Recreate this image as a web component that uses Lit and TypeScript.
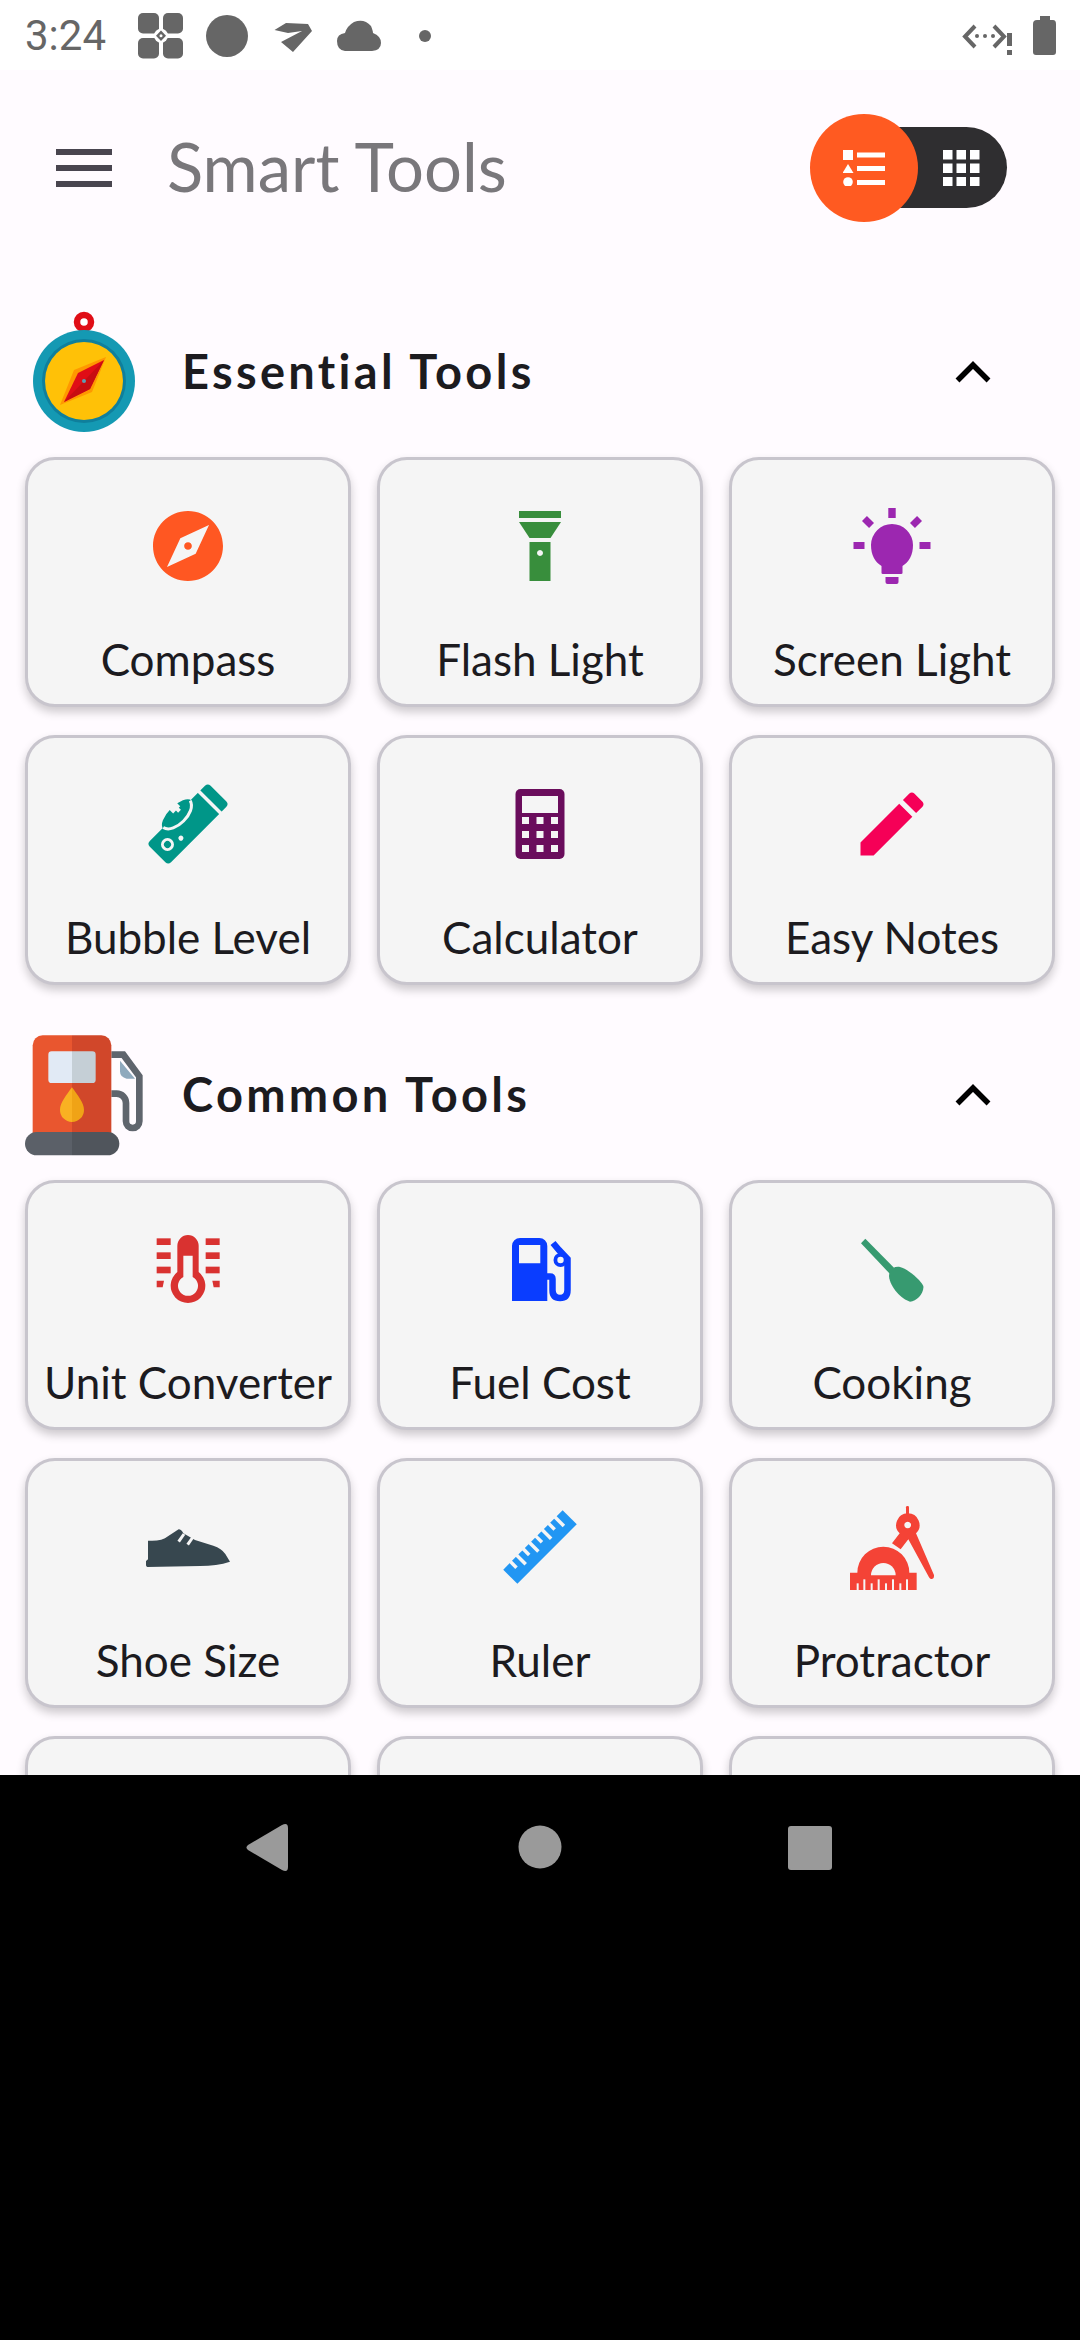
import { LitElement, css, html, svg } from 'lit';
import { customElement } from 'lit/decorators.js';

const CUT = '#f5f5f5';

// material icons are on a 24 grid, 3.5x gives the 84px they have in the app
const mat = (d: string, fill: string) =>
  svg`<g transform="scale(3.5) translate(-12,-12)"><path d=${d} fill=${fill} fill-rule="evenodd"/></g>`;

const compass = mat(
  'M12 2C6.48 2 2 6.48 2 12s4.48 10 10 10 10-4.48 10-10S17.52 2 12 2zm2.19 12.19L6 18l3.81-8.19L18 6l-3.81 8.19zM12 10.9c-.61 0-1.1.49-1.1 1.1s.49 1.1 1.1 1.1c.61 0 1.1-.49 1.1-1.1s-.49-1.1-1.1-1.1z',
  '#ff5722'
);

const flash = svg`<g fill="#388e3c">
  <rect x="-21" y="-35" width="42" height="7"/>
  <path d="M-21-24H21L10.500-8H-10.500Z"/>
  <path fill-rule="evenodd" d="M-10.500-4H10.500V35H-10.500ZM0 4a3 3 0 1 0 .01 0Z"/>
</g>`;

const bulb = svg`<g fill="#9c27b0">
  <path d="M-10.500 27V20C-17 16-21 9-21-1A21 21 0 0 1 21-1C21 9 17 16 10.500 20V27Q10.500 28 9 28H-9Q-10.500 28-10.500 27Z"/>
  <path d="M-6.500 31H6.500V36Q6.500 38 4.500 38H-4.500Q-6.500 38-6.500 36Z"/>
  <rect x="-3.700" y="-38" width="7.400" height="10"/>
  <rect x="-38.500" y="-4" width="11" height="7"/>
  <rect x="27.500" y="-4" width="11" height="7"/>
  <rect x="-3.500" y="-5" width="7" height="10" transform="translate(-24,-24) rotate(-45)"/>
  <rect x="-3.500" y="-5" width="7" height="10" transform="translate(24,-24) rotate(45)"/>
</g>`;

const level = svg`<g transform="rotate(-45)">
  <rect x="-43" y="-15" width="86" height="30" rx="4" fill="#009688"/>
  <ellipse cx="-1" cy="-14" rx="20" ry="9" fill="#009688"/>
  <rect x="29" y="-16" width="3.500" height="32" fill=${CUT}/>
  <path d="M-20-15C-17-2 15-2 18-15" fill="none" stroke=${CUT} stroke-width="3"/>
  <path d="M-3-24V-18H1V-15H5V-18H7V-24Z" fill=${CUT}/>
  <circle cx="-29" cy="0" r="5" fill="none" stroke=${CUT} stroke-width="3"/>
  <circle cx="-15" cy="5" r="2.500" fill=${CUT}/>
</g>`;

const calculator = svg`<g>
  <rect x="-24.500" y="-35" width="49" height="70" rx="5" fill="#6a0d5c"/>
  <rect x="-18" y="-28" width="36" height="17" fill=${CUT}/>
  ${[-7, 7, 21].map((y) =>
    [-18, -3.5, 11].map((x) => svg`<rect x=${x} y=${y} width="7" height="7" fill=${CUT}/>`)
  )}
</g>`;

const pen = mat(
  'M3 17.25V21h3.75L17.81 9.94l-3.750-3.750L3 17.250zM20.710 7.040c.39-.39.39-1.020 0-1.410l-2.340-2.340c-.39-.39-1.020-.39-1.410 0l-1.830 1.830 3.750 3.750 1.830-1.830z',
  '#f50057'
);

const thermo = svg`<g transform="scale(.3333) translate(-504,-732)" fill="#d93230">
  ${[640, 682, 725].map((y) => svg`
    <rect x="410" y=${y} width="42" height="20"/>
    <rect x="557" y=${y} width="42" height="20"/>`)}
  <path d="M410 767H432L428 787H410Z"/>
  <path d="M577 767H599V787H581Z"/>
  <path fill-rule="evenodd" d="M472 662A32 32 0 0 1 536 662V741A52 52 0 1 1 472 741ZM490 692V756A30 30 0 1 0 518 756V692Z"/>
</g>`;

const fuel = svg`<g>
  <path fill="#0a3dff" fill-rule="evenodd" d="M-28-23A8 8 0 0 1-20-31H-.700A8 8 0 0 1 7.300-23V32H-28ZM-21-24V-5.700H.300V-24Z"/>
  <path fill="none" stroke="#0a3dff" stroke-width="6.500" d="M7 7.500H10Q12.500 7.500 12.500 10V21Q12.500 29 20 29T27.500 21V-10L19-19L13-26"/>
  <circle cx="20.500" cy="-9" r="7" fill="#0a3dff"/>
  <circle cx="20.500" cy="-9" r="3.200" fill=${CUT}/>
</g>`;

const spoon = svg`<g transform="scale(.3333) translate(-516,-207)" fill="#379a70">
  <path d="M423 130L436 116L522 203L510 222Z"/>
  <path d="M507 228C508 210 520 198 540 201C562 206 600 238 610 258C613 278 590 305 570 305C545 298 510 262 507 228Z"/>
</g>`;

const shoe = svg`<g transform="scale(.3333) translate(-264,-141)">
  <path fill="#37474f" d="M144 122C170 124 190 120 205 108L236 88Q244 88 250 100L285 120L340 137Q365 145 376 162L390 185Q350 198 300 198L142 201Q138 200 138 196V183L144 178Z"/>
  <path fill="none" stroke=${CUT} stroke-width="9" d="M236 125L252 102M263 134L279 111"/>
</g>`;

const ruler = svg`<g transform="rotate(-45)">
  <rect x="-42" y="-10" width="84" height="20" fill="#2196f3"/>
  ${[-33, -24, -15, -6, 3, 12, 21, 30].map(
    (u, i) => svg`<rect x=${u} y="-11" width="3.500" height=${i % 2 ? 13 : 9} fill=${CUT}/>`
  )}
</g>`;

const protractor = svg`<g transform="scale(.3333) translate(-336,-141)" fill="#f44336">
  <path d="M210 218H232A78 78 0 0 1 388 218H410V270H210Z"/>
  <path d="M273 226A37 37 0 0 1 347 226Z" fill=${CUT}/>
  ${[230, 250, 272, 293, 315, 336, 358, 378].map(
    (x, i) => svg`<rect x=${x} y=${i % 2 ? 238 : 250} width="6" height=${i % 2 ? 32 : 20} fill=${CUT}/>`
  )}
  <rect x="378" y="18" width="9" height="30" rx="4"/>
  <path fill-rule="evenodd" d="M383 40A35 35 0 0 1 408 100L462 225Q463 238 453 237Q450 237 447 232L385 118L362 148L336 130L359 100A35 35 0 0 1 383 40ZM383 65A10 10 0 1 0 383.100 65Z"/>
</g>`;

const essential = [
  { label: 'Compass', icon: compass },
  { label: 'Flash Light', icon: flash },
  { label: 'Screen Light', icon: bulb },
  { label: 'Bubble Level', icon: level },
  { label: 'Calculator', icon: calculator },
  { label: 'Easy Notes', icon: pen },
];

const common = [
  { label: 'Unit Converter', icon: thermo },
  { label: 'Fuel Cost', icon: fuel },
  { label: 'Cooking', icon: spoon },
  { label: 'Shoe Size', icon: shoe },
  { label: 'Ruler', icon: ruler },
  { label: 'Protractor', icon: protractor },
  // third row is cut off by the nav bar
  { label: '', icon: svg`` },
  { label: '', icon: svg`` },
  { label: '', icon: svg`` },
];

const compassLogo = html`<svg class="logo" viewBox="25 0 120 124">
  <circle cx="84" cy="12" r="7" fill="#fff" stroke="#e00d16" stroke-width="6.500"/>
  <circle cx="84" cy="71" r="51" fill="#1499b3"/>
  <circle cx="84" cy="71" r="42" fill="#0f7f9c"/>
  <circle cx="84" cy="71" r="39" fill="#ffc107"/>
  <path d="M106 47L92 82L60 95L74 60Z" fill="#ff9800"/>
  <path d="M104 50L90 79L64 92L78 63Z" fill="#e00d16"/>
  <path d="M104 50L90 79L64 92Z" fill="#c70c12"/>
  <circle cx="84" cy="71" r="2" fill="#5c9db3"/>
</svg>`;

const pumpLogo = html`<svg class="logo" viewBox="15 25 360 372">
  <path d="M274 90H310L358 155V290A20 20 0 0 1 318 290V235A28 28 0 0 0 290 207H274" fill="none" stroke="#5f656d" stroke-width="20"/>
  <path d="M300 108L345 162H320Q300 158 300 140Z" fill="#8fa9bd"/>
  <path d="M38 62A30 30 0 0 1 68 32H156V330H38Z" fill="#e9562f"/>
  <path d="M156 32H244A30 30 0 0 1 274 62V330H156Z" fill="#d1472a"/>
  <path d="M95 80H156V175H95A10 10 0 0 1 85 165V90A10 10 0 0 1 95 80Z" fill="#e1eaf5"/>
  <path d="M156 80H217A10 10 0 0 1 227 90V165A10 10 0 0 1 217 175H156Z" fill="#c5cfd6"/>
  <path d="M156 188C140 210 120 235 120 255A36 36 0 0 0 156 292Z" fill="#f9b122"/>
  <path d="M156 188C172 210 192 235 192 255A36 36 0 0 1 156 292Z" fill="#f0a316"/>
  <path d="M50 322H156V392H50A35 35 0 0 1 50 322Z" fill="#5b6068"/>
  <path d="M156 322H263A35 35 0 0 1 263 392H156Z" fill="#50555c"/>
</svg>`;

const chevron = html`<svg class="chevron" viewBox="0 0 36 22">
  <path d="M2.500 19.500L18 4L33.500 19.500" fill="none" stroke="#000" stroke-width="5.500"/>
</svg>`;

@customElement('app-root')
export class AppRoot extends LitElement {
  static styles = css`
    :host {
      display: block;
      width: 1080px;
      height: 2340px;
      background: #000;
      overflow: hidden;
    }
    .status {
      height: 70px;
      background: #fff;
      display: flex;
      align-items: center;
      position: relative;
    }
    .time {
      font: 42px Roboto, sans-serif;
      color: #666;
      margin-left: 25px;
    }
    .status svg {
      position: absolute;
      left: 0;
      top: 0;
    }
    main {
      height: 1705px;
      overflow: hidden;
      background: #fffbff;
    }
    .topbar {
      height: 194px;
      display: flex;
      align-items: center;
      position: relative;
    }
    .menu {
      width: 56px;
      height: 38px;
      margin-left: 56px;
      margin-top: 2px;
      display: flex;
      flex-direction: column;
      justify-content: space-between;
    }
    .menu i {
      display: block;
      height: 6px;
      background: #49454f;
    }
    h1 {
      margin: -3px 0 0 55px;
      font: 400 67px Lato, sans-serif;
      color: #79777b;
    }
    .toggle {
      position: absolute;
      left: 830px;
      top: 57px;
      width: 177px;
      height: 81px;
      border-radius: 41px;
      background: #2f2e30;
    }
    .toggle .thumb {
      position: absolute;
      left: -20px;
      top: -13px;
      width: 108px;
      height: 108px;
      border-radius: 50%;
      background: #ff5a21;
      display: flex;
      align-items: center;
      justify-content: center;
    }
    .toggle .grid-icon {
      position: absolute;
      left: 113px;
      top: 23px;
    }
    .section-head {
      height: 124px;
      margin-top: 46px;
      margin-bottom: 23px;
      display: flex;
      align-items: center;
      padding-left: 25px;
    }
    .section + .section .section-head {
      margin-top: 48px;
    }
    .logo {
      width: 120px;
      height: 124px;
      flex: none;
    }
    h2 {
      flex: 1;
      margin: -2px 0 0 37px;
      font: 700 47px Lato, sans-serif;
      letter-spacing: 3.300px;
      color: #1c1b1f;
    }
    .chevron {
      width: 36px;
      height: 22px;
      margin-right: 89px;
    }
    .grid {
      display: grid;
      grid-template-columns: repeat(3, 326px);
      gap: 28px 26px;
      padding: 0 25px;
    }
    .card {
      height: 250px;
      box-sizing: border-box;
      border: 3px solid #c8c5cd;
      border-radius: 30px;
      background: #f5f5f5;
      box-shadow: 0 5px 10px rgba(0, 0, 0, 0.2);
      display: flex;
      flex-direction: column;
      align-items: center;
      padding-top: 36px;
    }
    .card svg {
      width: 100px;
      height: 100px;
      flex: none;
    }
    .card span {
      margin-top: 38px;
      font: 400 44px/50px Lato, sans-serif;
      color: #1c1b1f;
      white-space: nowrap;
    }
    .nav {
      height: 565px;
      background: #000;
      position: relative;
    }
    .nav svg {
      position: absolute;
      left: 0;
      top: 0;
    }
  `;

  private statusIcons() {
    return html`<svg width="1080" height="70" viewBox="0 0 1080 70">
      <g fill="#666">
        <rect x="138" y="13" width="21" height="20.500" rx="5"/>
        <rect x="163" y="13" width="20" height="20.500" rx="5"/>
        <rect x="138" y="38" width="21" height="20.500" rx="5"/>
        <rect x="163" y="38" width="20" height="20.500" rx="5"/>
        <circle cx="161" cy="35.700" r="7" fill="#fff"/>
        <path d="M161 30.500L166 35.700L161 41L156 35.700Z"/>
        <circle cx="161" cy="35.700" r="1.500" fill="#fff"/>
        <circle cx="227" cy="36" r="21"/>
        <path d="M274.500 30L286 23L308 24L312 31L293 52L281 42L302 31L288 33Z"/>
        <path d="M337 41Q337 34 345 33Q347 26 354 22Q364 18 371 26Q373 31 373 33Q381 36 381 43Q381 50 372 51H345Q337 50 337 41Z"/>
        <circle cx="425" cy="36" r="6"/>
        <path d="M1033 24Q1033 20 1037 20H1040V16H1050V20H1053Q1056 20 1056 24V52Q1056 55 1053 55H1036Q1033 55 1033 52Z"/>
        <rect x="1007" y="33" width="5" height="13"/>
        <rect x="1007" y="50" width="5" height="5"/>
        <circle cx="977" cy="36" r="2"/>
        <circle cx="985" cy="36" r="2"/>
        <circle cx="993" cy="36" r="2"/>
      </g>
      <path d="M975 26L965 36.500L975 47M994 26L1004 36.500L994 47" fill="none" stroke="#666" stroke-width="4"/>
    </svg>`;
  }

  private section(title: string, logo: unknown, tools: { label: string; icon: unknown }[]) {
    return html`<section class="section">
      <div class="section-head">${logo}<h2>${title}</h2>${chevron}</div>
      <div class="grid">
        ${tools.map(
          (t) => html`<div class="card">
            <svg viewBox="-50 -50 100 100">${t.icon}</svg>
            <span>${t.label}</span>
          </div>`
        )}
      </div>
    </section>`;
  }

  render() {
    return html`
      <div class="status">
        <span class="time">3:24</span>
        ${this.statusIcons()}
      </div>
      <main>
        <div class="topbar">
          <div class="menu"><i></i><i></i><i></i></div>
          <h1>Smart Tools</h1>
          <div class="toggle">
            <svg class="grid-icon" width="37" height="36" viewBox="0 0 37 36" fill="#fff">
              ${[0, 13.5, 27].map((y) =>
                [0, 13.5, 27].map((x) => svg`<rect x=${x} y=${y} width="9.500" height="9.500"/>`)
              )}
            </svg>
            <div class="thumb">
              <svg width="42" height="36" viewBox="0 0 42 36" fill="#fff">
                <rect x="0" y="0" width="10" height="10"/>
                <path d="M5 14L10.500 23H-.500Z"/>
                <circle cx="5" cy="32" r="4.800"/>
                <rect x="14" y="2.500" width="28" height="5"/>
                <rect x="14" y="16" width="28" height="5"/>
                <rect x="14" y="30" width="28" height="5"/>
              </svg>
            </div>
          </div>
        </div>
        ${this.section('Essential Tools', compassLogo, essential)}
        ${this.section('Common Tools', pumpLogo, common)}
      </main>
      <div class="nav">
        <svg width="1080" height="200" viewBox="0 1775 1080 200" fill="#9a9a9a">
          <path d="M288 1828V1867Q288 1873 282 1870L248 1850Q245 1847.500 248 1845L282 1825Q288 1822 288 1828Z"/>
          <circle cx="540" cy="1847" r="21.500"/>
          <rect x="788" y="1826" width="44" height="44" rx="3"/>
        </svg>
      </div>
    `;
  }
}
